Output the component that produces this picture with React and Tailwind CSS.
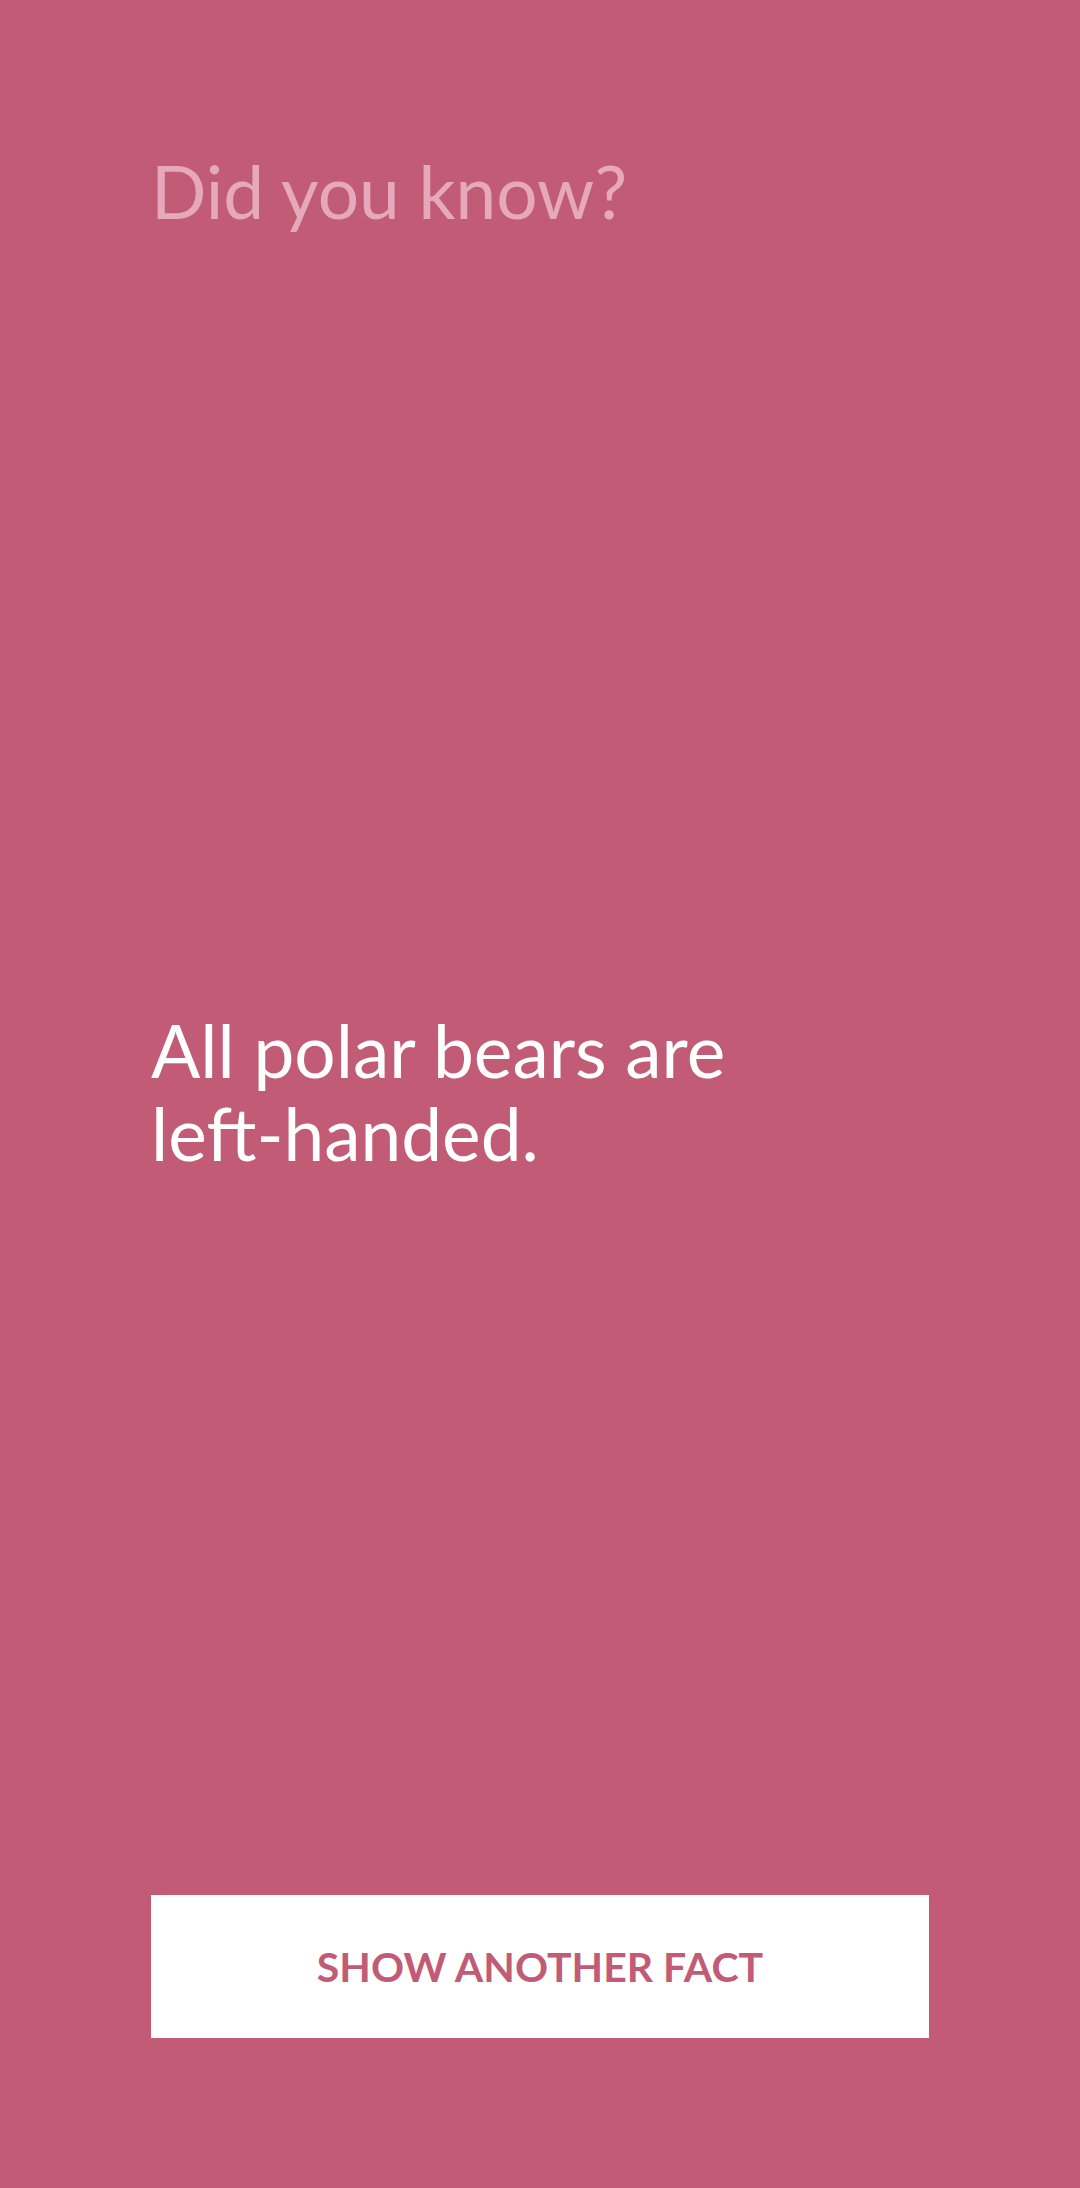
import React, { useState } from 'react';

const facts = [
  'All polar bears are left-handed.',
  'A group of flamingos is called a flamboyance.',
  'Honey never spoils.',
];

export default function App() {
  const [idx, setIdx] = useState(0);

  return (
    <div
      className="w-[1080px] h-[2188px] bg-[#c25b75] flex flex-col px-[151px] pt-[141px] pb-[150px]"
      style={{ fontFamily: 'Lato, "Open Sans", sans-serif' }}
    >
      <h1 className="text-[73px] leading-[100px] text-[#e5a9bb] font-normal">Did you know?</h1>

      <div className="flex-1 pt-[768px]">
        <p className="max-w-[640px] text-[73px] leading-[83px] text-white font-normal">{facts[idx]}</p>
      </div>

      <button
        onClick={() => setIdx((idx + 1) % facts.length)}
        className="w-full h-[143px] bg-white text-[#c25b75] text-[41px] font-bold"
      >
        SHOW ANOTHER FACT
      </button>
    </div>
  );
}
